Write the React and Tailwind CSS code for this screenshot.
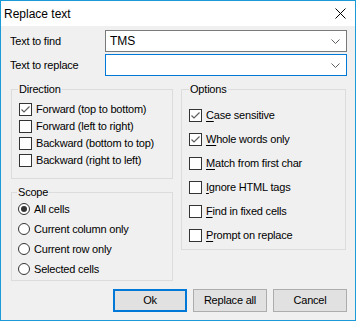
import React from "react";

const font = { fontFamily: '"Liberation Sans", Arial, sans-serif' };

function Check({ checked }) {
  return (
    <span className="relative flex h-[13px] w-[13px] shrink-0 items-center justify-center border border-[#333333] bg-white">
      {checked && (
        <svg width="11" height="11" viewBox="0 0 11 11" className="absolute left-0 top-0">
          <path d="M1.5 5.5 L4 8 L9.5 2.5" fill="none" stroke="#5e5e5e" strokeWidth="1.2" />
        </svg>
      )}
    </span>
  );
}

function Radio({ checked }) {
  return (
    <span className="flex h-[12px] w-[12px] shrink-0 items-center justify-center rounded-full border border-[#333333] bg-white">
      {checked && <span className="h-[6px] w-[6px] rounded-full bg-[#333333]" />}
    </span>
  );
}

function Combo({ value, focused }) {
  return (
    <div
      className={
        "flex h-[22px] w-[242px] items-center justify-between bg-white pl-[4px] pr-[6px] " +
        (focused ? "border border-[#0078d7]" : "border border-[#7a7a7a]")
      }
    >
      <span className="text-[12px] tracking-normal text-black">{value}</span>
      <svg width="9" height="5" viewBox="0 0 9 5">
        <path d="M0.5 0.5 L4.5 4.5 L8.5 0.5" fill="none" stroke="#606060" strokeWidth="1" />
      </svg>
    </div>
  );
}

function Acc({ k, rest }) {
  return (
    <span>
      <span className="underline underline-offset-[2px]">{k}</span>
      {rest}
    </span>
  );
}

export default function App() {
  return (
    <div
      className="flex h-[321px] w-[356px] flex-col border border-[#1a9ad6] bg-[#f0f0f0] text-[11px] tracking-[-0.2px] text-black"
      style={font}
    >
      <div className="flex h-[25px] shrink-0 items-center justify-between bg-white pl-[3px] pr-[9px]">
        <span className="text-[12px] tracking-normal text-black">Replace text</span>
        <svg width="11" height="11" viewBox="0 0 11 11">
          <path d="M0.5 0.5 L10.5 10.5 M10.5 0.5 L0.5 10.5" stroke="#000" strokeWidth="1" />
        </svg>
      </div>

      <div className="flex flex-1 flex-col pl-[9px] pr-[8px] pt-[4px]">
        <div className="flex flex-col gap-[2px]">
          <div className="flex items-center">
            <span className="w-[95px]">Text to find</span>
            <Combo value="TMS" />
          </div>
          <div className="flex items-center">
            <span className="w-[95px]">Text to replace</span>
            <Combo value="" focused />
          </div>
        </div>

        <div className="mt-[7px] flex gap-[8px] pl-[1px]">
          <div className="flex w-[162px] flex-col gap-[7px]">
            <fieldset className="h-[96px] border border-[#dcdcdc] px-[7px]">
              <legend className="ml-[-1px] px-[1px] leading-[13px]">Direction</legend>
              <div className="flex flex-col pt-[5px]">
                {[
                  ["Forward (top to bottom)", true],
                  ["Forward (left to right)", false],
                  ["Backward (bottom to top)", false],
                  ["Backward (right to left)", false],
                ].map(([t, c]) => (
                  <div key={t} className="flex h-[17px] items-center gap-[4px]">
                    <Check checked={c} />
                    <span>{t}</span>
                  </div>
                ))}
              </div>
            </fieldset>
            <fieldset className="h-[95px] border border-[#dcdcdc] px-[6px]">
              <legend className="ml-[-1px] px-[1px] leading-[13px]">Scope</legend>
              <div className="flex flex-col pt-0">
                {[
                  ["All cells", true],
                  ["Current column only", false],
                  ["Current row only", false],
                  ["Selected cells", false],
                ].map(([t, c]) => (
                  <div key={t} className="flex h-[20px] items-center gap-[4px]">
                    <Radio checked={c} />
                    <span>{t}</span>
                  </div>
                ))}
              </div>
            </fieldset>
          </div>

          <fieldset className="h-[167px] w-[165px] border border-[#dcdcdc] px-[7px]">
            <legend className="ml-[0px] px-[1px] leading-[13px]">Options</legend>
            <div className="flex flex-col pt-[7px]">
              {[
                ["C", "ase sensitive", true],
                ["W", "hole words only", true],
                ["M", "atch from first char", false],
                ["I", "gnore HTML tags", false],
                ["F", "ind in fixed cells", false],
                ["P", "rompt on replace", false],
              ].map(([k, r, c]) => (
                <div key={k} className="flex h-[24px] items-center gap-[4px]">
                  <Check checked={c} />
                  <Acc k={k} rest={r} />
                </div>
              ))}
            </div>
          </fieldset>
        </div>

        <div className="mt-auto mb-[8px] flex justify-end gap-[6px]">
          <button className="flex h-[23px] w-[74px] items-center justify-center border-2 border-[#0078d7] bg-[#e1e1e1] text-[11px]">
            Ok
          </button>
          <button className="flex h-[23px] w-[74px] items-center justify-center border border-[#adadad] bg-[#e1e1e1] text-[11px]">
            Replace all
          </button>
          <button className="flex h-[23px] w-[74px] items-center justify-center border border-[#adadad] bg-[#e1e1e1] text-[11px]">
            Cancel
          </button>
        </div>
      </div>
    </div>
  );
}
